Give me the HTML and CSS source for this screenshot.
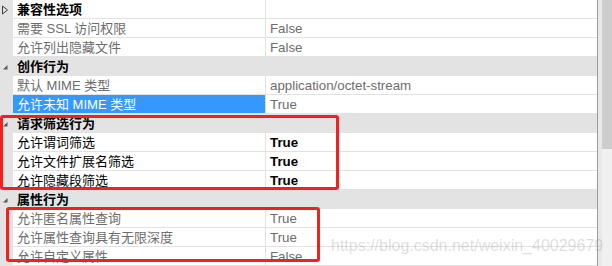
FILE: index.html
```html
<!DOCTYPE html>
<html lang="zh-CN">
<head>
    <meta charset="UTF-8">
    <title>属性</title>
    <link rel="stylesheet" href="styles.css">
</head>
<body>
    <div class="panel">
        <div class="grid">
            <div class="row">
                <div class="gutter">
                    <svg class="glyph" width="8" height="10" viewBox="0 0 8 10"><polygon points="1.5,1 6.5,5 1.5,9" fill="none" stroke="#3c3c3c" stroke-width="1"/></svg>
                </div>
                <div class="name strong">兼容性选项</div>
                <div class="value"></div>
            </div>
            <div class="row">
                <div class="gutter"></div>
                <div class="name dim">需要 SSL 访问权限</div>
                <div class="value dim">False</div>
            </div>
            <div class="row">
                <div class="gutter"></div>
                <div class="name dim">允许列出隐藏文件</div>
                <div class="value dim">False</div>
            </div>
            <div class="row category">
                <div class="gutter">
                    <svg class="glyph" width="8" height="8" viewBox="0 0 8 8"><polygon points="6.5,2 6.5,6.5 2,6.5" fill="#5a5a5a"/></svg>
                </div>
                <div class="name">创作行为</div>
                <div class="value"></div>
            </div>
            <div class="row">
                <div class="gutter"></div>
                <div class="name dim">默认 MIME 类型</div>
                <div class="value dim">application/octet-stream</div>
            </div>
            <div class="row">
                <div class="gutter"></div>
                <div class="name selected">允许未知 MIME 类型</div>
                <div class="value dim">True</div>
            </div>
            <div class="row category">
                <div class="gutter">
                    <svg class="glyph" width="8" height="8" viewBox="0 0 8 8"><polygon points="6.5,2 6.5,6.5 2,6.5" fill="#5a5a5a"/></svg>
                </div>
                <div class="name">请求筛选行为</div>
                <div class="value"></div>
            </div>
            <div class="row">
                <div class="gutter"></div>
                <div class="name">允许谓词筛选</div>
                <div class="value strong">True</div>
            </div>
            <div class="row">
                <div class="gutter"></div>
                <div class="name">允许文件扩展名筛选</div>
                <div class="value strong">True</div>
            </div>
            <div class="row">
                <div class="gutter"></div>
                <div class="name">允许隐藏段筛选</div>
                <div class="value strong">True</div>
            </div>
            <div class="row category">
                <div class="gutter">
                    <svg class="glyph" width="8" height="8" viewBox="0 0 8 8"><polygon points="6.5,2 6.5,6.5 2,6.5" fill="#5a5a5a"/></svg>
                </div>
                <div class="name">属性行为</div>
                <div class="value"></div>
            </div>
            <div class="row">
                <div class="gutter"></div>
                <div class="name dim">允许匿名属性查询</div>
                <div class="value dim">True</div>
            </div>
            <div class="row">
                <div class="gutter"></div>
                <div class="name dim">允许属性查询具有无限深度</div>
                <div class="value dim">True</div>
            </div>
            <div class="row">
                <div class="gutter"></div>
                <div class="name dim">允许自定义属性</div>
                <div class="value dim">False</div>
            </div>
        </div>
        <div class="scrollbar">
            <div class="track"><div class="thumb"></div></div>
        </div>
    </div>

    <!-- annotations drawn over the screenshot -->
    <div class="mark mark-filter"></div>
    <div class="mark mark-props"></div>
    <div class="watermark">https://blog.csdn.net/weixin_40029679</div>
</body>
</html>
```

FILE: styles.css
```css
body {
    margin: 0;
    width: 612px;
    height: 266px;
    overflow: hidden;
    position: relative;
    background: #ffffff;
    font-family: "Liberation Sans", "Noto Sans CJK SC", sans-serif;
    font-size: 13.3px;
    color: #000000;
}

.panel {
    display: flex;
    height: 266px;
}

.grid {
    width: 598px;
    border-right: 1px solid #9c9c9c;
    box-sizing: border-box;
    display: flex;
    flex-direction: column;
}

.row {
    display: flex;
    height: 19px;
    flex-shrink: 0;
}

.gutter {
    width: 13px;
    background: #e3e3e3;
    display: flex;
    align-items: center;
    padding-top: 1px;
    box-sizing: border-box;
}

.glyph {
    margin-left: 1px;
}

.name {
    width: 253px;
    box-sizing: border-box;
    padding: 2px 0 0 4px;
    border-right: 1px solid #e2e2e2;
    border-bottom: 1px solid #e2e2e2;
    font-size: 13px;
    line-height: 16px;
    white-space: nowrap;
    overflow: hidden;
}

.value {
    flex: 1;
    padding: 1px 0 0 4px;
    border-bottom: 1px solid #e2e2e2;
    line-height: 17px;
    white-space: nowrap;
    overflow: hidden;
}

.strong {
    font-weight: bold;
}

.dim {
    color: #6d6d6d;
}

.selected {
    background: #3399ff;
    color: #ffffff;
}

.category .name,
.category .value {
    background: #e3e3e3;
    font-weight: bold;
    border-right-color: #e3e3e3;
    border-bottom-color: #e3e3e3;
}

.scrollbar {
    width: 14px;
    background: #e8e8e8;
    padding-left: 4px;
    box-sizing: border-box;
}

.track {
    height: 100%;
    background: #f0f0f0;
}

.thumb {
    height: 149px;
    background: #cdcdcd;
}

.mark {
    position: absolute;
    border: 3px solid #f42020;
    border-radius: 3px;
    box-sizing: border-box;
}

.mark-filter {
    left: 0;
    top: 115px;
    width: 339px;
    height: 75px;
}

.mark-props {
    left: 6px;
    top: 207px;
    width: 314px;
    height: 55px;
}

.watermark {
    position: absolute;
    left: 331px;
    top: 237px;
    font-size: 16px;
    line-height: 18px;
    color: rgba(160, 160, 160, 0.35);
    white-space: nowrap;
}
```
